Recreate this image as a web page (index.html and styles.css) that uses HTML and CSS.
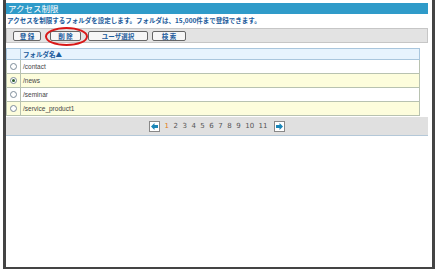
FILE: index.html
```html
<!DOCTYPE html>
<html lang="ja">
<head>
  <meta charset="UTF-8" />
  <title>アクセス制限</title>
  <link rel="stylesheet" href="styles.css">
</head>
<body>
  <div class="frame">
    <div class="title">アクセス制限</div>
    <p class="desc">アクセスを制限するフォルダを設定します。フォルダは、15,000件まで登録できます。</p>

    <div class="toolbar">
      <span class="btn b-add">登 録</span>
      <span class="btn b-del">削 除<span class="ring"></span></span>
      <span class="btn b-user">ユーザ選択</span>
      <span class="btn b-find">検 索</span>
    </div>

    <table class="list">
      <tr class="head">
        <th class="sel"></th>
        <th>フォルダ名▲</th>
      </tr>
      <tr>
        <td class="sel"><span class="radio"></span></td>
        <td>/contact</td>
      </tr>
      <tr class="alt">
        <td class="sel"><span class="radio on"></span></td>
        <td>/news</td>
      </tr>
      <tr>
        <td class="sel"><span class="radio"></span></td>
        <td>/seminar</td>
      </tr>
      <tr class="alt">
        <td class="sel"><span class="radio"></span></td>
        <td>/service_product1</td>
      </tr>
    </table>

    <div class="pager">
      <span class="arrow">
        <svg width="9" height="9" viewBox="0 0 9 9"><path d="M1 4.5 L4.5 1 L4.5 3 L8 3 L8 6 L4.5 6 L4.5 8 Z" fill="#1a86b8"/></svg>
      </span>
      <span class="cur">1</span>
      <span>2</span>
      <span>3</span>
      <span>4</span>
      <span>5</span>
      <span>6</span>
      <span>7</span>
      <span>8</span>
      <span>9</span>
      <span>10</span>
      <span>11</span>
      <span class="arrow next">
        <svg width="9" height="9" viewBox="0 0 9 9"><path d="M8 4.5 L4.5 1 L4.5 3 L1 3 L1 6 L4.5 6 L4.5 8 Z" fill="#1a86b8"/></svg>
      </span>
    </div>
  </div>
</body>
</html>
```

FILE: styles.css
```css
body, html {
  margin: 0; padding: 0; background: white;
  font-family: "Noto Sans CJK JP", "Liberation Sans", sans-serif;
}
.frame {
  margin-left: 3px;
  width: 426px;
  height: 264px;
  padding: 3px 0 0 0;
  border-left: 3px solid #444;
  border-right: 3px solid #444;
  border-bottom: 3px solid #444;
  box-sizing: content-box;
  position: relative;
}
.title {
  width: 420px;
  height: 11px;
  line-height: 11px;
  background: #2f9bc9;
  color: white;
  font-size: 8.5px;
  padding-left: 2px;
}
.desc {
  margin: 0;
  height: 14px;
  line-height: 13px;
  font-size: 6.5px;
  font-weight: bold;
  color: #1d5c9c;
  padding-left: 1px;
}
.toolbar {
  width: 414px;
  height: 13px;
  background: #e3e3e3;
  border: 1px solid #c6c6c6;
  display: flex;
  align-items: center;
  padding-left: 6px;
}
.btn {
  position: relative;
  height: 8px;
  line-height: 8px;
  border: 1px solid #666;
  border-radius: 2px;
  background: #f6f6f6;
  color: #1d5c9c;
  font-size: 6.5px;
  font-weight: bold;
  text-align: center;
}
.b-add { width: 26px; margin-right: 9px; }
.b-del { width: 29px; margin-right: 7px; }
.b-user { width: 58px; margin-right: 4px; }
.b-find { width: 32px; }
.ring {
  position: absolute;
  left: -6px; top: -5px;
  width: 39px; height: 15px;
  border: 2px solid #d81818;
  border-radius: 50%;
}
.list {
  margin-top: 5px;
  width: 414px;
  border-collapse: collapse;
  font-family: "Liberation Sans", sans-serif;
  font-size: 6.5px;
  color: #444;
}
.list th, .list td {
  border: 1px solid #b8c2b0;
  padding: 0 0 0 2px;
  text-align: left;
}
.list tr { height: 14px; }
.list tr.head { height: 11px; }
.head th {
  background: #e7f3fd;
  border-color: #a9c6dd;
  color: #1d5c9c;
  font-family: "Noto Sans CJK JP", sans-serif;
  font-size: 6.5px;
  font-weight: bold;
  line-height: 9px;
}
.list .sel {
  width: 13px;
  padding: 0;
  text-align: center;
}
.alt td { background: #fdfddc; }
.radio {
  display: inline-block;
  width: 5px; height: 5px;
  border: 1px solid #7d8c99;
  border-radius: 50%;
  background: white;
  vertical-align: middle;
  position: relative;
}
.radio.on::after {
  content: "";
  position: absolute;
  left: 1px; top: 1px;
  width: 3px; height: 3px;
  border-radius: 50%;
  background: #2c5e2c;
}
.pager {
  margin-top: 1px;
  width: 422px;
  height: 18px;
  background: #e0e0e0;
  border-bottom: 1px solid #b4c8d8;
  display: flex;
  justify-content: center;
  align-items: center;
  gap: 4.5px;
  font-family: "DejaVu Sans", sans-serif;
  font-size: 7px;
  color: #555;
}
.pager .cur { color: #e07a1a; }
.arrow {
  width: 9px; height: 9px;
  border: 1px solid #888;
  background: white;
  display: flex;
}
.arrow.next { margin-left: 2px; }
```
